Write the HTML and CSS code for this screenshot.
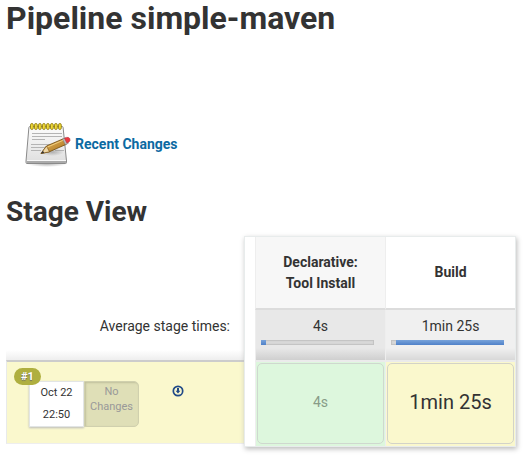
FILE: index.html
```html
<!DOCTYPE html>
<html lang="en">
<head>
<meta charset="utf-8">
<title>Pipeline simple-maven</title>
<link rel="stylesheet" href="styles.css">
</head>
<body>
<main class="page">
  <h1 class="title">Pipeline simple-maven</h1>

  <a class="changes-link" href="#">
    <svg class="notepad" viewBox="0 0 48 48" width="48" height="48" aria-hidden="true">
      <defs>
        <linearGradient id="paper" x1="0" y1="0" x2="0" y2="1">
          <stop offset="0" stop-color="#fcfcfc"/><stop offset="1" stop-color="#dedede"/>
        </linearGradient>
        <linearGradient id="wood" x1="0" y1="0" x2="1" y2="1">
          <stop offset="0" stop-color="#e9bd62"/><stop offset="1" stop-color="#a66d19"/>
        </linearGradient>
        <radialGradient id="shade"><stop offset="0" stop-color="#888" stop-opacity=".6"/><stop offset="1" stop-color="#888" stop-opacity="0"/></radialGradient>
      </defs>
      <g transform="translate(0 1)">
      <ellipse cx="22" cy="43" rx="20" ry="3" fill="url(#shade)"/>
      <path d="M5 5.500h32q1 0 1.100 1l3.400 33.500v1.500q0 1-1 1h-38.500q-1 0-1-1v-1.500l2.900-33.500q.2-1 1.100-1z" fill="url(#paper)" stroke="#8a8a8a"/>
      <path d="M1.500 40h39.500v2h-39.500z" fill="#aaa"/>
      <path d="M2 39.500h39" stroke="#f8f8f8"/>
      <path d="M7 12.500h30M7 15.500h30M7 18.500h13M6 23.500h21M6 26.500h15M6 29.500h10M30 29.500h9" stroke="#b4b4b4"/>
      <ellipse cx="27" cy="31" rx="12" ry="4" fill="url(#shade)"/>
      <g fill="#f0d936" stroke="#8a7609" stroke-width=".8">
        <rect x="5.500" y="2.500" width="2.800" height="6" rx="1.400"/><rect x="9.500" y="2.500" width="2.800" height="6" rx="1.400"/>
        <rect x="13.500" y="2.500" width="2.800" height="6" rx="1.400"/><rect x="17.500" y="2.500" width="2.800" height="6" rx="1.400"/>
        <rect x="21.500" y="2.500" width="2.800" height="6" rx="1.400"/><rect x="25.500" y="2.500" width="2.800" height="6" rx="1.400"/>
        <rect x="29.500" y="2.500" width="2.800" height="6" rx="1.400"/><rect x="33.500" y="2.500" width="2.800" height="6" rx="1.400"/>
      </g>
      <path d="M16 32.500l5.500-7.500 17-7.300 2.800 5.600-17 7.500z" fill="url(#wood)" stroke="#6f4708" stroke-width=".8"/>
      <path d="M16 32.500l5.500-7.500 3 5.800z" fill="#efd7a5" stroke="#6f4708" stroke-width=".6"/>
      <path d="M16 32.500l2-2.800 1.200 2.200z" fill="#333"/>
      <path d="M22.500 26l16.500-7.100" stroke="#f3cf80"/>
      <path d="M37.500 18.100l3-1.300 2.800 5.500-3 1.400z" fill="#bbb" stroke="#777" stroke-width=".5"/>
      <path d="M39.500 17.200l2-.8q2.500-.6 3.400 1.400.7 2.200-1.200 3.400l-1.800.9z" fill="#ed3840" stroke="#b2363c" stroke-width=".6"/>
      </g>
    </svg>
    <span>Recent Changes</span>
  </a>

  <h2 class="subtitle">Stage View</h2>

  <section class="stage-view">
    <div class="runs">
      <div class="average-label">Average stage times:</div>
      <div class="run">
        <span class="badge">#1</span>
        <div class="run-time"><span>Oct 22</span><span>22:50</span></div>
        <div class="run-commits">No Changes</div>
        <a class="download" href="#" aria-label="Artifacts">
          <svg viewBox="0 0 12 12" width="12" height="12" aria-hidden="true">
            <circle cx="6" cy="6" r="4.700" fill="none" stroke="#204a87" stroke-width="1.700"/>
            <path d="M5 3h2v2.800h1.400l-2.400 2.700-2.400-2.700h1.400z" fill="#204a87"/>
          </svg>
        </a>
      </div>
    </div>
    <div class="panel">
      <table class="stages">
        <thead>
          <tr class="names"><th scope="col">Declarative:<br>Tool Install</th><th scope="col">Build</th></tr>
        </thead>
        <tbody>
          <tr class="averages">
            <td>4s<div class="bar"><div class="bar-fill" style="width:4%"></div></div></td>
            <td>1min 25s<div class="bar"><div class="bar-fill" style="width:96%"></div></div></td>
          </tr>
          <tr class="results">
            <td class="success"><div class="result">4s</div></td>
            <td class="running"><div class="result">1min 25s</div></td>
          </tr>
        </tbody>
      </table>
    </div>
  </section>
</main>
</body>
</html>
```
FILE: styles.css
```css
* { box-sizing: border-box; }

body {
  margin: 0;
  background: #fff;
  color: #333;
  font: 14px/20px Roboto, "Liberation Sans", sans-serif;
}

.page { padding: 0 14px 11px 6px; }

.title,
.subtitle {
  margin: 0;
  font-weight: 700;
}

.title { font-size: 32px; line-height: 36px; }
.subtitle { font-size: 28px; line-height: 32px; margin-top: 28px; }

.changes-link {
  display: flex;
  width: max-content;
  align-items: center;
  gap: 2px;
  margin: 84px 0 0 19px;
  color: #0b6aa2;
  font-weight: 700;
  text-decoration: none;
}

.notepad { display: block; }

.stage-view {
  display: flex;
  align-items: flex-start;
  margin-top: 8px;
}

.runs {
  flex: 1;
  min-width: 0;
}

.average-label {
  height: 124px;
  padding: 80px 14px 0 0;
  text-align: right;
  background: linear-gradient(to top, #eee, #fff 10px);
}

.run {
  position: relative;
  display: flex;
  align-items: flex-start;
  height: 84px;
  padding: 19px 0 0 22px;
  background: #faf8cd;
  border-top: 2px solid #cccccc;
  border-left: 1px solid #e8eaea;
  border-bottom: 1px solid #eeeeee;
}

.badge {
  position: absolute;
  top: 6px;
  left: 7px;
  padding: 0 7px;
  border-radius: 9px;
  background: #afaf3f;
  color: #fff;
  font-size: 11px;
  font-weight: 700;
  line-height: 17px;
  text-shadow: 0 1px 1px #666;
}

.run-time,
.run-commits {
  width: 55px;
  height: 46px;
  font-size: 11px;
  text-align: center;
}

.run-time {
  display: flex;
  flex-direction: column;
  line-height: 22px;
  background: #fff;
  border: 1px solid #e2e5e5;
  box-shadow: 0 1px 2px #bbb;
}

.run-commits {
  padding-top: 2px;
  line-height: 15px;
  color: #999;
  background: #dfdfb7;
  border: 1px solid #d0d0ae;
  border-radius: 0 5px 5px 0;
  box-shadow: inset 1px 1px 2px #c0c09c;
}

.download { margin: 4px 0 0 33px; }
.download svg { display: block; }

.panel {
  position: relative;
  width: 272px;
  padding-left: 10px;
  background: #fff;
  border: 1px solid #e8ecec;
  box-shadow: 1px 2px 5px #bbb;
}

.stages {
  width: 100%;
  table-layout: fixed;
  border-spacing: 0;
  text-align: center;
}

.stages th,
.stages td {
  padding: 0;
  border-left: 1px solid #eeeeee;
}

.names th {
  height: 73px;
  line-height: 21px;
  border-bottom: 2px solid #dcdcdc;
}

.names th:first-child { background: #f7f7f7; }

.averages td {
  height: 52px;
  padding: 6px 0 0;
  vertical-align: top;
  background: linear-gradient(to top, #d8d8d8, #f0f0f0 12px);
  border-bottom: 2px solid #ebebeb;
}

.averages td:first-child { background: linear-gradient(to top, #cfcfcf, #e8e8e8 12px); }

.bar {
  display: flex;
  justify-content: flex-end;
  height: 5px;
  margin: 4px 11px 0 5px;
  background: #d8d8d8;
  box-shadow: inset 0 0 1px 1px #c2c2c2;
}

.averages td:first-child .bar { justify-content: flex-start; }
.bar-fill { background: linear-gradient(#78a3da, #4f81c9); }

.stages .results td { padding: 1px 1px 2px; }

.result {
  display: grid;
  place-items: center;
  height: 81px;
  padding-bottom: 3px;
  border: 1px solid #cfd8cf;
  border-radius: 5px;
}

.success { background: #ddf7dd; color: #889c88; }
.running { background: #faf8cd; font-size: 20px; }
.running .result { border-color: #d3d3c8; }
```
